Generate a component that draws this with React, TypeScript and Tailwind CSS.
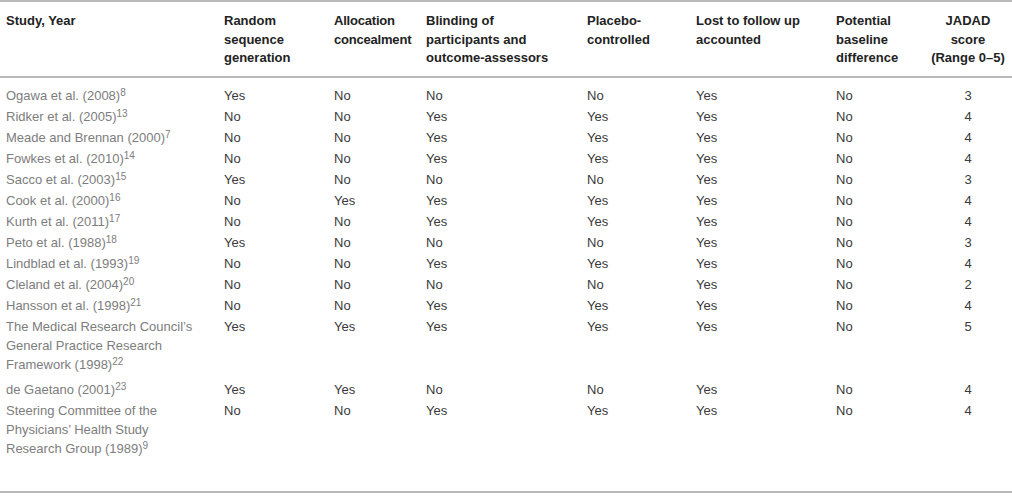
import React from 'react';

type Row = {
  study: React.ReactNode;
  cells: string[];
  score: string;
  multi?: boolean;
};

const Sup = ({ n }: { n: string }) => (
  <span className="text-[10px] leading-none relative -top-[4px] align-baseline">{n}</span>
);

const rows: Row[] = [
  { study: <>Ogawa et al. (2008)<Sup n="8" /></>, cells: ['Yes', 'No', 'No', 'No', 'Yes', 'No'], score: '3' },
  { study: <>Ridker et al. (2005)<Sup n="13" /></>, cells: ['No', 'No', 'Yes', 'Yes', 'Yes', 'No'], score: '4' },
  { study: <>Meade and Brennan (2000)<Sup n="7" /></>, cells: ['No', 'No', 'Yes', 'Yes', 'Yes', 'No'], score: '4' },
  { study: <>Fowkes et al. (2010)<Sup n="14" /></>, cells: ['No', 'No', 'Yes', 'Yes', 'Yes', 'No'], score: '4' },
  { study: <>Sacco et al. (2003)<Sup n="15" /></>, cells: ['Yes', 'No', 'No', 'No', 'Yes', 'No'], score: '3' },
  { study: <>Cook et al. (2000)<Sup n="16" /></>, cells: ['No', 'Yes', 'Yes', 'Yes', 'Yes', 'No'], score: '4' },
  { study: <>Kurth et al. (2011)<Sup n="17" /></>, cells: ['No', 'No', 'Yes', 'Yes', 'Yes', 'No'], score: '4' },
  { study: <>Peto et al. (1988)<Sup n="18" /></>, cells: ['Yes', 'No', 'No', 'No', 'Yes', 'No'], score: '3' },
  { study: <>Lindblad et al. (1993)<Sup n="19" /></>, cells: ['No', 'No', 'Yes', 'Yes', 'Yes', 'No'], score: '4' },
  { study: <>Cleland et al. (2004)<Sup n="20" /></>, cells: ['No', 'No', 'No', 'No', 'Yes', 'No'], score: '2' },
  { study: <>Hansson et al. (1998)<Sup n="21" /></>, cells: ['No', 'No', 'Yes', 'Yes', 'Yes', 'No'], score: '4' },
  {
    study: <>The Medical Research Council’s General Practice Research Framework (1998)<Sup n="22" /></>,
    cells: ['Yes', 'Yes', 'Yes', 'Yes', 'Yes', 'No'],
    score: '5',
    multi: true,
  },
  { study: <>de Gaetano (2001)<Sup n="23" /></>, cells: ['Yes', 'Yes', 'No', 'No', 'Yes', 'No'], score: '4' },
  {
    study: <>Steering Committee of the Physicians’ Health Study Research Group (1989)<Sup n="9" /></>,
    cells: ['No', 'No', 'Yes', 'Yes', 'Yes', 'No'],
    score: '4',
    multi: true,
  },
];

export default function App() {
  return (
    <div className="w-[1012px] h-[496px] bg-white overflow-hidden font-['Liberation_Sans',Arial,sans-serif] text-[13px]">
      <table className="w-[1012px] table-fixed border-collapse">
        <colgroup>
          <col className="w-[224px]" />
          <col className="w-[110px]" />
          <col className="w-[92px]" />
          <col className="w-[161px]" />
          <col className="w-[109px]" />
          <col className="w-[140px]" />
          <col className="w-[94px]" />
          <col className="w-[82px]" />
        </colgroup>
        <thead>
          <tr className="border-t-2 border-b-2 border-[#b9b9b9] text-[#222] leading-[18.5px] align-top">
            <th className="text-left font-bold pl-[6px] pr-2 pt-[10px] pb-[8px]">Study, Year</th>
            <th className="text-left font-bold pr-2 pt-[10px] pb-[8px]">
              <div className="w-[80px]">Random sequence generation</div>
            </th>
            <th className="text-left font-bold pr-1 pt-[10px] pb-[8px] tracking-[-0.2px]">
              Allocation concealment
            </th>
            <th className="text-left font-bold pr-2 pt-[10px] pb-[8px]">
              <div className="w-[140px]">Blinding of participants and outcome-assessors</div>
            </th>
            <th className="text-left font-bold pr-2 pt-[10px] pb-[8px]">
              Placebo-
              <br />
              controlled
            </th>
            <th className="text-left font-bold pr-2 pt-[10px] pb-[8px]">Lost to follow up accounted</th>
            <th className="text-left font-bold pr-2 pt-[10px] pb-[8px]">
              <div className="w-[70px]">Potential baseline difference</div>
            </th>
            <th className="text-center font-bold pr-[6px] pt-[10px] pb-[8px]">
              JADAD
              <br />
              score
              <br />
              (Range 0–5)
            </th>
          </tr>
        </thead>
        <tbody className="leading-[19px] text-[#3a3a3a] border-b-2 border-[#b9b9b9]">
          <tr className="h-[8px]">
            <td colSpan={8} />
          </tr>
          {rows.map((r, i) => (
            <tr key={i} className="align-top">
              <td className={`pl-[6px] pr-[20px] pt-[1px] text-[#7d7d7d] ${r.multi ? 'pb-[5px]' : 'pb-[1px]'}`}>
                {r.study}
              </td>
              {r.cells.map((c, j) => (
                <td key={j} className="py-[1px] pr-2">
                  {c}
                </td>
              ))}
              <td className="py-[1px] pr-[6px] text-center">{r.score}</td>
            </tr>
          ))}
          <tr className="h-[29px]">
            <td colSpan={8} />
          </tr>
        </tbody>
      </table>
    </div>
  );
}
